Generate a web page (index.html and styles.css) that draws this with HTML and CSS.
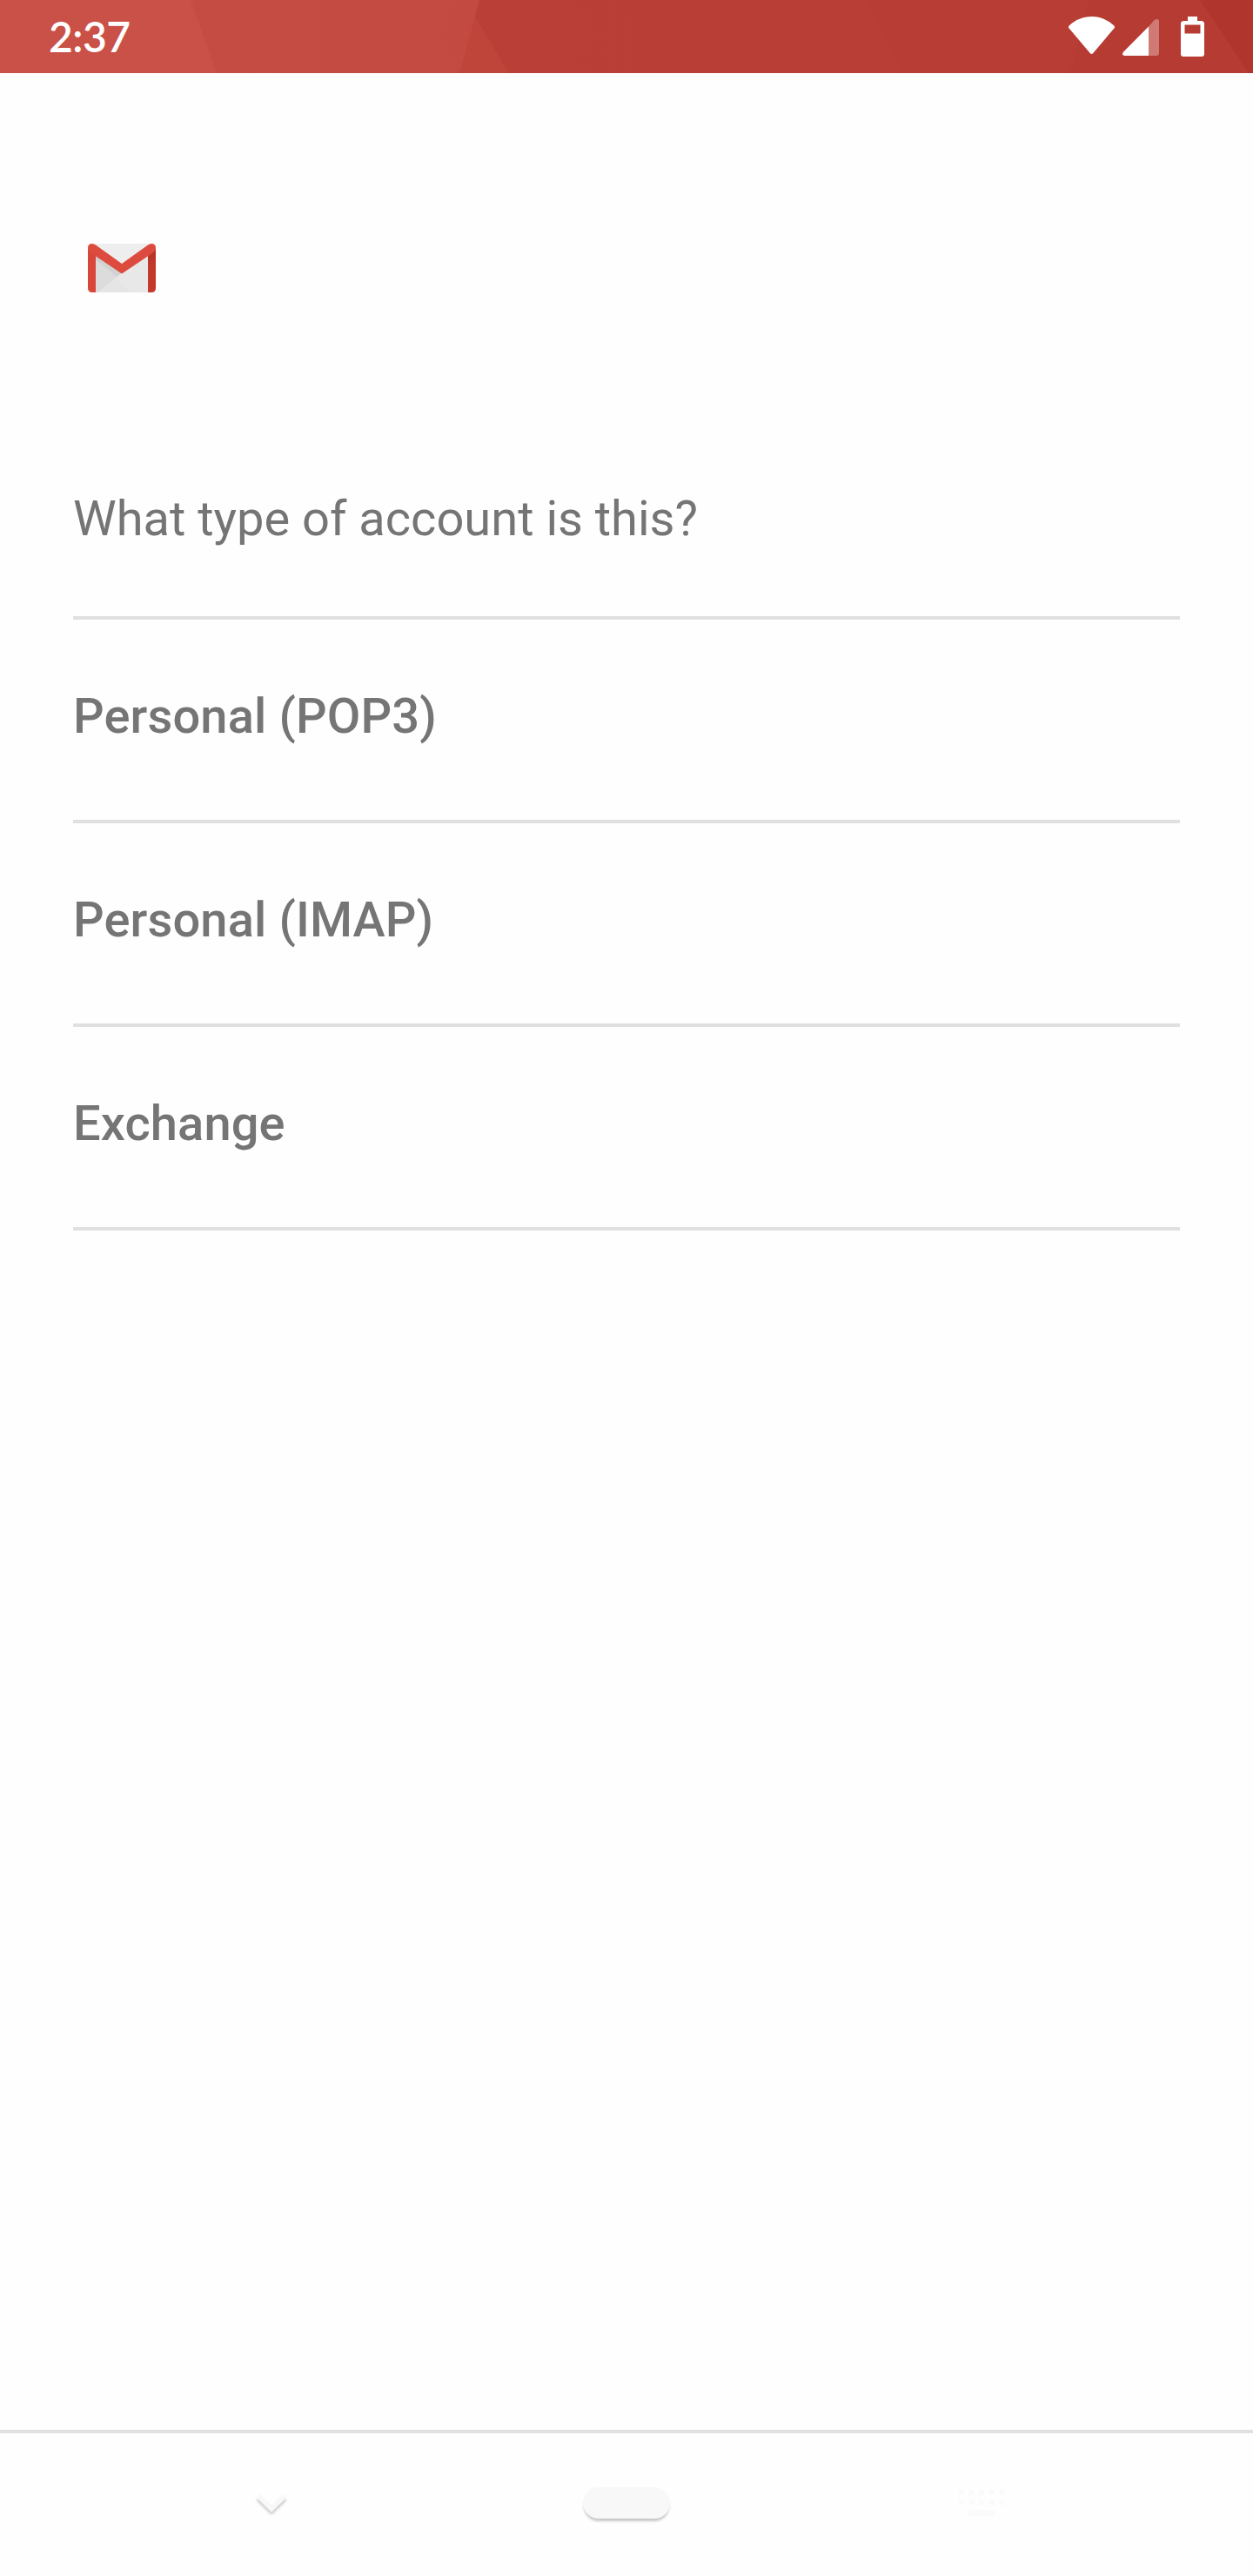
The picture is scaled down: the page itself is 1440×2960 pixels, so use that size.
FILE: index.html
```html
<!DOCTYPE html>
<html lang="en">
<head>
<meta charset="utf-8">
<title>Account type</title>
<link rel="stylesheet" href="styles.css">
</head>
<body>
<div class="screen">
  <header class="status">
    <svg class="status-art" viewBox="0 0 1440 84" aria-hidden="true">
      <defs>
        <linearGradient id="g1" x1="0" x2="1"><stop offset="0" stop-color="#ca5147"/><stop offset="1" stop-color="#c84f45"/></linearGradient>
        <linearGradient id="g2" x1="0" x2="1"><stop offset="0" stop-color="#c54c42"/><stop offset="1" stop-color="#c34a40"/></linearGradient>
        <linearGradient id="g3" x1="0" x2="1"><stop offset="0" stop-color="#ba4037"/><stop offset="1" stop-color="#b93f36"/></linearGradient>
      </defs>
      <rect width="1440" height="84" fill="url(#g1)"/>
      <path d="M219 0H551L528 84H249Z" fill="url(#g2)"/>
      <path d="M551 0H1440V84H528Z" fill="#bf453b"/>
      <path d="M551 0H1000L1040 84H584.500L546 19Z" fill="url(#g3)"/>
      <path d="M997 0H1251L1229 84H1038Z" fill="#b83e35"/>
      <path d="M1251 0H1440V84H1229Z" fill="#b63c33"/>
      <path d="M1379 0H1440V84H1435Z" fill="#af352d"/>
    </svg>
    <span class="time">2:37</span>
    <svg class="status-icons" viewBox="0 0 160 50" aria-hidden="true">
      <path d="M0.700 10.500C15 -3.500 38 -3.500 52.300 10.500Q53.500 11.800 52.600 13.200L28.300 42Q26.500 44 24.700 42L0.400 13.200Q-.5 11.800 .7 10.500Z" fill="#fff"/>
      <path d="M92 11.500L98.500 4.300Q100 2.500 102 3Q104 3.300 104 5V42Q104 45 101 45H92Z" fill="#cf7a74"/>
      <path d="M92 11.500V45H64.500Q60.500 44.500 63 40.800Z" fill="#fff"/>
      <path fill-rule="evenodd" d="M137 0H148V5H153Q156 5.500 156 8V43Q156 46 153 46H132Q129 46 129 43V8Q129 5.500 132 5H137ZM133.500 9.500V19.500H151.500V9.500Z" fill="#fff"/>
    </svg>
  </header>

  <main class="content">
    <svg class="logo" viewBox="0 0 78 56" role="img" aria-label="Gmail">
      <defs>
        <linearGradient id="right" x1="0" y1="0" x2="0" y2="1"><stop offset="0" stop-color="#af3327"/><stop offset=".4" stop-color="#c2382b"/><stop offset="1" stop-color="#c53a2d"/></linearGradient>
        <linearGradient id="fold" x1="0" y1="0" x2="1" y2="1"><stop offset="0" stop-color="#cbcbcb"/><stop offset="1" stop-color="#dedede"/></linearGradient>
      </defs>
      <path d="M5 0H73V56H5Z" fill="#eee"/>
      <path d="M9 13L33 39L12 56H9Z" fill="#dcdcdc"/>
      <path d="M9 14L39 34L33 39L9 18Z" fill="url(#fold)"/>
      <path d="M9 14L33 39L39 34Z" fill="#d2d2d2"/>
      <path d="M12 56L32.500 38.500L50 56Z" fill="#e5e5e5"/>
      <path d="M39 34L69 14V56H50L32.500 38.500Z" fill="#e8e8e8"/>
      <path d="M0 5L9 13.500V56H5Q0 56 0 51Z" fill="#d8473a"/>
      <path d="M78 5L69 13.500V56H73Q78 56 78 51Z" fill="url(#right)"/>
      <path d="M0 5Q0 0 5 0Q7 0 9 1.500L39 23L69 1.500Q71 0 73 0Q78 0 78 5Q78 8 75.500 10L39 34.500L2.500 10Q0 8 0 5Z" fill="#dd4b3e"/>
    </svg>
    <h1 class="question">What type of account is this?</h1>
    <ul class="options">
      <li class="option">Personal (POP3)</li>
      <li class="option">Personal (IMAP)</li>
      <li class="option">Exchange</li>
    </ul>
  </main>

  <nav class="nav">
    <div class="nav-cell">
      <svg class="chevron" viewBox="0 0 44 36" aria-hidden="true"><path d="M6.700 9L22 24L37.300 9" fill="none" stroke="#f8f8f8" stroke-width="5.500"/></svg>
    </div>
    <div class="nav-cell"><span class="pill"></span></div>
    <div class="nav-cell">
      <svg class="keyboard" viewBox="0 0 54 30" aria-hidden="true"><path fill="#fafafa" d="M1 0h6v6h-6zM12.500 0h6v6h-6zM24 0h6v6h-6zM36 0h6v6h-6zM47.500 0h6v6h-6zM1 11.500h6v6h-6zM12.500 11.500h6v6h-6zM24 11.500h6v6h-6zM36 11.500h6v6h-6zM47.500 11.500h6v6h-6zM12.500 23.500h29v6h-29z"/></svg>
    </div>
  </nav>
</div>
</body>
</html>
```
FILE: styles.css
```css
* {
  box-sizing: border-box;
}

body {
  margin: 0;
  background: #fefefe;
  color: #757575;
  font-family: Roboto, sans-serif;
}

.screen {
  display: flex;
  flex-direction: column;
  height: 2960px;
}

.status {
  position: relative;
  display: flex;
  align-items: center;
  justify-content: space-between;
  height: 84px;
  padding: 0 52px 0 56px;
}

.status-art {
  position: absolute;
  inset: 0;
  width: 1440px;
  height: 84px;
}

.time {
  position: relative;
  color: #fff;
  font: 600 48px/84px Lato, sans-serif;
  letter-spacing: -0.5px;
}

.status-icons {
  position: relative;
  width: 160px;
  height: 50px;
  margin-top: 4px;
  overflow: visible;
}

.content {
  flex: 1;
  padding: 196px 84px 0;
}

.logo {
  display: block;
  width: 78px;
  height: 56px;
  margin-left: 17px;
}

.question {
  height: 376px;
  margin: 0;
  padding-top: 227px;
  border-bottom: 4px solid #e0e0e0;
  font-size: 56px;
  font-weight: 400;
  line-height: 66px;
}

.options {
  margin: 0;
  padding: 0;
  list-style: none;
}

.option {
  height: 234px;
  padding-top: 78px;
  border-bottom: 4px solid #e0e0e0;
  font-size: 56px;
  font-weight: 500;
  line-height: 66px;
  letter-spacing: 0.12px;
}

.nav {
  display: grid;
  grid-template-columns: 624px 192px 624px;
  height: 168px;
  border-top: 4px solid #e0e0e0;
}

.nav-cell {
  display: flex;
  justify-content: center;
  padding-top: 62px;
}

.chevron {
  width: 44px;
  height: 36px;
  margin-top: 1px;
  filter: drop-shadow(0 3px 1.5px rgba(0, 0, 0, 0.2));
}

.pill {
  width: 100px;
  height: 36px;
  border-radius: 18px;
  background: #f8f8f8;
  box-shadow: 0 4px 3px -1px rgba(0, 0, 0, 0.22);
}

.keyboard {
  width: 54px;
  height: 30px;
  margin-top: 3px;
}
```
